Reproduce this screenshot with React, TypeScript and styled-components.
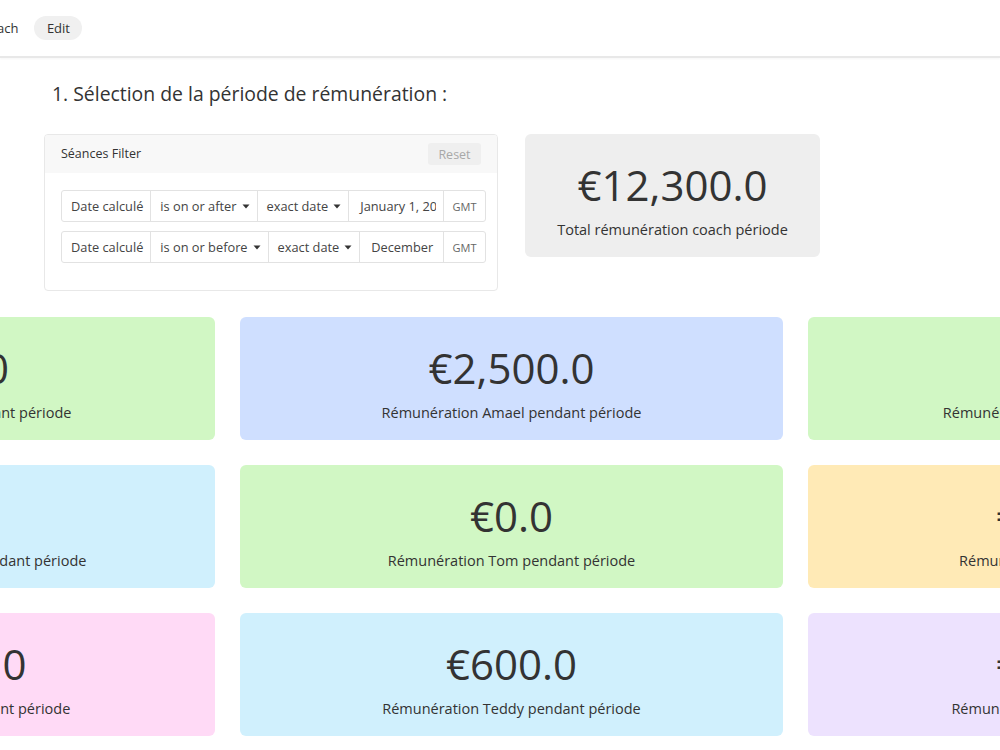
import React from "react";
import styled, { createGlobalStyle } from "styled-components";

const GlobalStyle = createGlobalStyle`
  html, body {
    margin: 0;
    padding: 0;
    background: #ffffff;
    overflow: hidden;
  }
  body {
    font-family: "Open Sans", "Noto Sans", sans-serif;
    color: #333333;
  }
`;

const Page = styled.div`
  width: 1000px;
  height: 750px;
  overflow: hidden;
`;

const TopBar = styled.header`
  height: 56px;
  display: flex;
  align-items: center;
  border-bottom: 2px solid #e8e8e8;
  box-shadow: 0 1px 2px rgba(0, 0, 0, 0.04);
`;

const Nav = styled.nav`
  display: flex;
  align-items: center;
  gap: 16px;
  margin-left: -19px;
`;

const Crumb = styled.span`
  font-size: 13px;
  color: #333333;
`;

const EditPill = styled.button`
  height: 24px;
  width: 48px;
  border: none;
  border-radius: 12px;
  background: #f0f0f0;
  font-family: inherit;
  font-size: 13px;
  color: #333333;
  padding: 0;
`;

const Title = styled.h2`
  margin: 23px 0 0 52px;
  font-size: 19.4px;
  font-weight: 400;
  line-height: 26px;
  color: #333333;
`;

const TopSection = styled.section`
  display: flex;
  align-items: flex-start;
  gap: 27px;
  margin: 27px 0 0 44px;
`;

const FilterPanel = styled.div`
  width: 454px;
  border: 1px solid #e8e8e8;
  border-radius: 4px;
  box-sizing: border-box;
  overflow: hidden;
`;

const FilterHeader = styled.div`
  height: 38px;
  display: flex;
  align-items: center;
  justify-content: space-between;
  padding: 0 16px 0 16px;
  background: #f8f8f8;
`;

const FilterTitle = styled.span`
  font-size: 12.5px;
  color: #333333;
  margin-top: -2px;
`;

const ResetButton = styled.button`
  width: 53px;
  height: 22px;
  border: none;
  border-radius: 3px;
  background: #efefef;
  color: #a8a8a8;
  font-family: inherit;
  font-size: 12.5px;
  padding: 0;
`;

const FilterBody = styled.div`
  display: flex;
  flex-direction: column;
  gap: 9px;
  padding: 17px 11px 27px 16px;
`;

const ConditionRow = styled.div`
  display: flex;
  height: 32px;
  border: 1px solid #e2e2e2;
  border-radius: 3px;
  box-sizing: border-box;
`;

const Cell = styled.div<{ $grow?: boolean }>`
  flex: ${(p) => (p.$grow ? "1 1 0" : "0 0 auto")};
  min-width: 0;
  box-sizing: border-box;
  display: flex;
  align-items: center;
  gap: 5px;
  padding: 0 7px 0 9px;
  border-right: 1px solid #e2e2e2;
  font-size: 12.8px;
  color: #444444;
  white-space: nowrap;
`;

const Zone = styled.div`
  flex: 0 0 41px;
  display: flex;
  align-items: center;
  justify-content: center;
  font-size: 11px;
  color: #666666;
`;

const Clip = styled.span`
  display: block;
  width: 100%;
  overflow: hidden;
  white-space: nowrap;
  padding-left: 2px;
`;

const TotalCard = styled.div`
  width: 295px;
  height: 123px;
  border-radius: 6px;
  background: #eeeeee;
  box-sizing: border-box;
  padding-top: 24px;
  display: flex;
  flex-direction: column;
  align-items: center;
`;

const Amount = styled.div`
  font-size: 42px;
  line-height: 54px;
  color: #333333;
  white-space: nowrap;
`;

const Caption = styled.div`
  margin-top: 8px;
  font-size: 14.5px;
  line-height: 20px;
  color: #333333;
  white-space: nowrap;
`;

const CardGrid = styled.section`
  display: grid;
  grid-template-columns: repeat(3, 543px);
  grid-auto-rows: 123px;
  gap: 25px;
  margin: 26px 0 0 -328px;
`;

const StatCard = styled.div<{ $bg: string }>`
  border-radius: 6px;
  background: ${(p) => p.$bg};
  box-sizing: border-box;
  padding-top: 24px;
  display: flex;
  flex-direction: column;
  align-items: center;
`;

const Caret = () => (
  <svg width="8" height="5" viewBox="0 0 8 5">
    <path d="M0.5 0.5 L7.5 0.5 L4 4.5 Z" fill="#333" />
  </svg>
);

const conditions = [
  { op: "is on or after", date: "January 1, 2024" },
  { op: "is on or before", date: "December 31, 2024" },
];

const cards = [
  { bg: "#d1f7c4", amount: "€800.0", name: "Lucas" },
  { bg: "#cfdfff", amount: "€2,500.0", name: "Amael" },
  { bg: "#d1f7c4", amount: "€600.0", name: "Mathieu" },
  { bg: "#d0f0fd", amount: "€0.0", name: "Alexandre" },
  { bg: "#d1f7c4", amount: "€0.0", name: "Tom" },
  { bg: "#ffeab6", amount: "€3,100.0", name: "Eva" },
  { bg: "#ffdaf6", amount: "€1,200.0", name: "Hugo" },
  { bg: "#d0f0fd", amount: "€600.0", name: "Teddy" },
  { bg: "#ede2fe", amount: "€3,500.0", name: "Marie" },
];

export default function App() {
  return (
    <Page>
      <GlobalStyle />
      <TopBar>
        <Nav>
          <Crumb>Coach</Crumb>
          <EditPill>Edit</EditPill>
        </Nav>
      </TopBar>
      <Title>1. Sélection de la période de rémunération :</Title>
      <TopSection>
        <FilterPanel>
          <FilterHeader>
            <FilterTitle>Séances Filter</FilterTitle>
            <ResetButton>Reset</ResetButton>
          </FilterHeader>
          <FilterBody>
            {conditions.map((c) => (
              <ConditionRow key={c.op}>
                <Cell>Date calculé</Cell>
                <Cell>
                  {c.op} <Caret />
                </Cell>
                <Cell>
                  exact date <Caret />
                </Cell>
                <Cell $grow>
                  <Clip>{c.date}</Clip>
                </Cell>
                <Zone>GMT</Zone>
              </ConditionRow>
            ))}
          </FilterBody>
        </FilterPanel>
        <TotalCard>
          <Amount>€12,300.0</Amount>
          <Caption>Total rémunération coach période</Caption>
        </TotalCard>
      </TopSection>
      <CardGrid>
        {cards.map((c, i) => (
          <StatCard key={i} $bg={c.bg}>
            <Amount>{c.amount}</Amount>
            <Caption>Rémunération {c.name} pendant période</Caption>
          </StatCard>
        ))}
      </CardGrid>
    </Page>
  );
}
